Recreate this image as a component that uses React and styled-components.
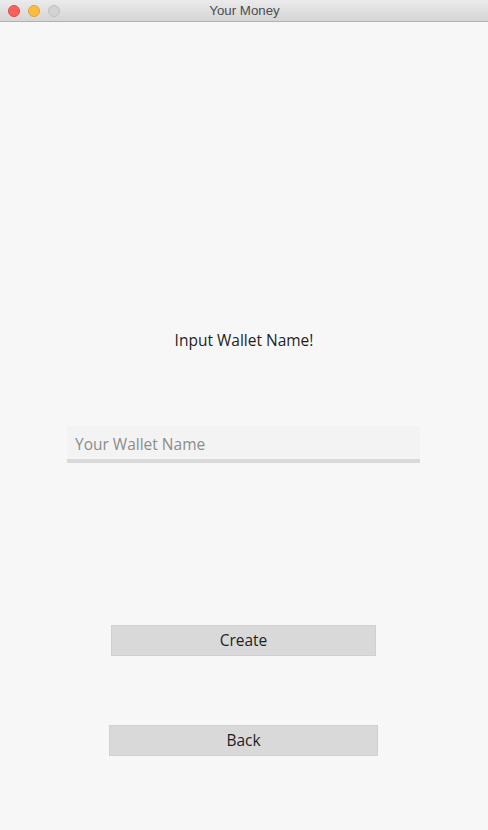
import React from 'react';
import styled, { createGlobalStyle } from 'styled-components';

const GlobalStyle = createGlobalStyle`
    html, body {
        margin : 0;
        padding : 0;
        background : #f7f7f7;
    }
    body {
        font-family: "Open Sans", "Noto Sans", sans-serif;
    }
`;

const App = () => {
    return (
        <Window>
            <GlobalStyle />
            <TitleBar>
                <Lights>
                    <Light color="#fc605c" border="#de4a45" />
                    <Light color="#fdbc40" border="#dea136" />
                    <Light color="#d3d3d3" border="#bfbfbf" />
                </Lights>
                <Title>Your Money</Title>
            </TitleBar>
            <Content>
                <Heading>Input Wallet Name!</Heading>
                <NameInput placeholder="Your Wallet Name" />
                <Button width={265}>Create</Button>
                <Button width={269} gap={69}>Back</Button>
            </Content>
        </Window>
    );
};

export default App;

const Window = styled.div`
    width : 488px;
    height : 830px;
    display : flex;
    flex-direction: column;
    background-color : #f7f7f7;
    overflow : hidden;
`;

const TitleBar = styled.div`
    position : relative;
    height : 21px;
    flex-shrink : 0;
    display : flex;
    align-items : center;
    justify-content : center;
    background : linear-gradient(#ebebeb, #d5d5d5);
    border-bottom : 1px solid #b1b1b1;
`;

const Lights = styled.div`
    position : absolute;
    left : 8px;
    top : 5px;
    display : flex;
    gap : 8px;
`;

const Light = styled.span`
    width : 10px;
    height : 10px;
    border-radius : 50%;
    background-color : ${p => p.color};
    border : 1px solid ${p => p.border};
`;

const Title = styled.div`
    font-family: "Liberation Sans", "Helvetica", sans-serif;
    font-size : 13.3px;
    color : #4d4d4d;
    margin-left : 1px;
`;

const Content = styled.div`
    display : flex;
    flex-direction : column;
    align-items : center;
    padding-top : 308px;
`;

const Heading = styled.div`
    font-size : 15.5px;
    line-height : 20px;
    color : #1f1f1f;
`;

const NameInput = styled.input`
    box-sizing : border-box;
    margin-top : 76px;
    margin-right : 1px;
    width : 353px;
    height : 37px;
    padding : 0 8px;
    padding-top : 2px;
    border : none;
    border-bottom : 4px solid #d9d9d9;
    background-color : #f3f3f3;
    font-family: "Open Sans", "Noto Sans", sans-serif;
    font-size : 15.5px;
    color : #333;
    outline : none;

    &::placeholder {
        color : #8c8c8c;
    }
`;

const Button = styled.button`
    box-sizing : border-box;
    margin-top : ${p => p.gap || 162}px;
    margin-right : 1px;
    width : ${p => p.width}px;
    height : 31px;
    background-color : #d9d9d9;
    border : 1px solid #d0d0d0;
    border-radius : 0;
    font-family: "Open Sans", "Noto Sans", sans-serif;
    font-size : 15.5px;
    color : #1f1f1f;
    padding : 0 0 2px;
`;
